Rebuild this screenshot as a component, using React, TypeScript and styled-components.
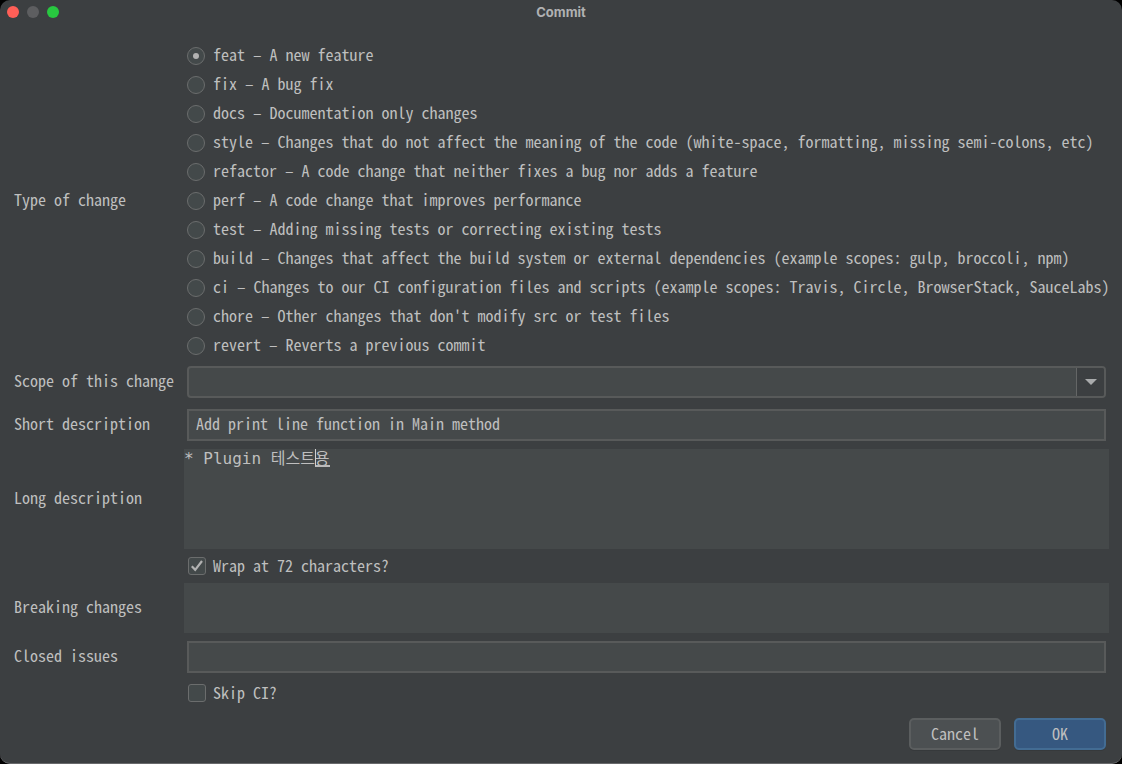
import React, { useState } from "react";
import styled, { createGlobalStyle, css } from "styled-components";

const mono = `"Noto Sans Mono CJK KR", "Noto Sans Mono CJK SC", "Liberation Mono", monospace`;

const GlobalStyle = createGlobalStyle`
  *, *::before, *::after { box-sizing: border-box; }
  body {
    margin: 0;
    background: #000;
    color: #bfbfbf;
    font: 16px/20px ${mono};
  }
  input, select, textarea, button { font: inherit; color: inherit; margin: 0; }
`;

const Window = styled.main`
  display: flex;
  flex-direction: column;
  min-height: calc(100vh - 1px);
  background: #3c3f41;
  border-bottom: 1px solid #68696b;
  border-radius: 10px;
`;

const TitleBar = styled.header`
  display: grid;
  grid-template-columns: 1fr auto 1fr;
  align-items: center;
  height: 24px;
  padding: 0 7px;
`;

const Title = styled.h1`
  margin: 0;
  font: 700 13px/24px "Inter", sans-serif;
  color: #b0b1b2;
`;

const Lights = styled.div`
  display: flex;
  gap: 8px;
`;

const Light = styled.button<{ $color: string }>`
  width: 12px;
  height: 12px;
  padding: 0;
  border: 0;
  border-radius: 50%;
  background: ${(p) => p.$color};
`;

const Form = styled.form`
  display: flex;
  flex-direction: column;
  padding: 17px 13px 13px 14px;
`;

const Row = styled.div<{ $gap?: number }>`
  display: grid;
  grid-template-columns: 170px minmax(0, 1fr);
  align-items: center;
  margin-top: ${(p) => p.$gap ?? 0}px;
`;

const RowLabel = styled.label`
  padding-bottom: 4px;
  white-space: nowrap;
`;

const Options = styled.div`
  display: flex;
  flex-direction: column;
`;

const Option = styled.label`
  display: flex;
  align-items: center;
  gap: 8px;
  height: 29px;
  padding-left: 3px;
  white-space: nowrap;
`;

const OptionText = styled.span`
  padding-bottom: 3px;
`;

const Radio = styled.input`
  appearance: none;
  display: grid;
  place-items: center;
  flex: none;
  width: 18px;
  height: 18px;
  border: 1px solid #6b6d6d;
  border-radius: 50%;
  background: #43494a;

  &:checked::before {
    content: "";
    width: 6px;
    height: 6px;
    border-radius: 50%;
    background: #b2b2b2;
  }
`;

const CheckLabel = styled.label`
  grid-column: 2;
  display: flex;
  align-items: center;
  gap: 7px;
  height: 34px;
  padding-left: 4px;
`;

const CheckBox = styled.span`
  display: grid;
  width: 18px;
  height: 18px;

  > * { grid-area: 1 / 1; }
  svg { pointer-events: none; visibility: hidden; }
  input:checked + svg { visibility: visible; }
`;

const Check = styled.input`
  appearance: none;
  width: 18px;
  height: 18px;
  border: 1px solid #6b6d6d;
  border-radius: 3px;
  background: #43494a;
`;

const field = css`
  width: 100%;
  height: 32px;
  padding: 0 7px 4px;
  border: 2px solid #585a5a;
  border-radius: 0;
  outline: 0;
  background: #45494a;
`;

const FieldBox = styled.div`
  display: grid;
  padding: 0 3px;
`;

const TextField = styled.input`
  ${field}
`;

const Combo = styled.div`
  display: grid;
  grid-template-columns: minmax(0, 1fr) 30px;
  margin: 0 3px;
`;

const Select = styled.select`
  ${field}
  appearance: none;
  grid-area: 1 / 1 / 2 / 3;
  border-radius: 4px;
`;

const Arrow = styled.span`
  grid-area: 1 / 2;
  display: grid;
  place-items: center;
  margin: 2px 2px 2px 0;
  border-left: 1px solid #646666;
  border-radius: 0 2px 2px 0;
  background: #3c3f41;
  pointer-events: none;
`;

const Editor = styled.div`
  position: relative;
  display: grid;
`;

const TextArea = styled.textarea<{ $height: number }>`
  display: block;
  width: 100%;
  height: ${(p) => p.$height}px;
  padding: 0;
  border: 0;
  outline: 0;
  resize: none;
  background: #45494a;
  font: 16px/20px "DejaVu Sans Mono", "Noto Sans CJK KR", monospace;
`;

/* Caret and underline shown around the syllable being composed */
const Composition = styled.span`
  position: absolute;
  top: 0;
  left: 131px;
  width: 15px;
  height: 18px;
  border-left: 1px solid #d0d0d0;
  border-bottom: 2px solid #bbbbbb;
  pointer-events: none;
`;

const Footer = styled.footer`
  display: flex;
  justify-content: flex-end;
  gap: 13px;
  margin-top: 8px;
  padding-right: 3px;
`;

const Button = styled.button<{ $primary?: boolean }>`
  width: 92px;
  height: 32px;
  padding: 0 0 3px;
  border: 2px solid ${(p) => (p.$primary ? "#436c93" : "#5b5e5f")};
  border-radius: 5px;
  background: ${(p) => (p.$primary ? "#365880" : "#4c5052")};
  box-shadow: 0 1px 0 #36393b;
`;

const types = [
  ["feat", "A new feature"],
  ["fix", "A bug fix"],
  ["docs", "Documentation only changes"],
  ["style", "Changes that do not affect the meaning of the code (white-space, formatting, missing semi-colons, etc)"],
  ["refactor", "A code change that neither fixes a bug nor adds a feature"],
  ["perf", "A code change that improves performance"],
  ["test", "Adding missing tests or correcting existing tests"],
  ["build", "Changes that affect the build system or external dependencies (example scopes: gulp, broccoli, npm)"],
  ["ci", "Changes to our CI configuration files and scripts (example scopes: Travis, Circle, BrowserStack, SauceLabs)"],
  ["chore", "Other changes that don't modify src or test files"],
  ["revert", "Reverts a previous commit"],
];

function CheckOption({ label, checked }: { label: string; checked?: boolean }) {
  return (
    <CheckLabel>
      <CheckBox>
        <Check type="checkbox" defaultChecked={checked} />
        <svg width="18" height="18" viewBox="0 0 18 18" fill="none" stroke="#b2b2b2" strokeWidth="2.2">
          <path d="M3.8 9.2 7.2 12.8 14 4" />
        </svg>
      </CheckBox>
      <OptionText>{label}</OptionText>
    </CheckLabel>
  );
}

export default function App() {
  const [type, setType] = useState("feat");
  const [composing, setComposing] = useState(true);

  return (
    <>
      <GlobalStyle />
      <Window>
        <TitleBar>
          <Lights>
            <Light type="button" aria-label="Close" $color="#ff5f57" />
            <Light type="button" aria-label="Minimize" disabled $color="#5d5e60" />
            <Light type="button" aria-label="Zoom" $color="#28c840" />
          </Lights>
          <Title>Commit</Title>
        </TitleBar>
        <Form onSubmit={(e) => e.preventDefault()}>
          <Row>
            <RowLabel as="span" id="type-label">Type of change</RowLabel>
            <Options role="radiogroup" aria-labelledby="type-label">
              {types.map(([name, text]) => (
                <Option key={name}>
                  <Radio type="radio" name="type" checked={type === name} onChange={() => setType(name)} />
                  <OptionText>{`${name} – ${text}`}</OptionText>
                </Option>
              ))}
            </Options>
          </Row>
          <Row $gap={6}>
            <RowLabel htmlFor="scope">Scope of this change</RowLabel>
            <Combo>
              <Select id="scope"><option value="" /></Select>
              <Arrow>
                <svg width="12" height="6" viewBox="0 0 12 6" fill="#a9abac">
                  <path d="M0 0h12L6 6z" />
                </svg>
              </Arrow>
            </Combo>
          </Row>
          <Row $gap={11}>
            <RowLabel htmlFor="short">Short description</RowLabel>
            <FieldBox>
              <TextField id="short" defaultValue="Add print line function in Main method" />
            </FieldBox>
          </Row>
          <Row $gap={8}>
            <RowLabel htmlFor="long">Long description</RowLabel>
            <Editor>
              <TextArea
                id="long"
                $height={100}
                spellCheck={false}
                defaultValue="* Plugin 테스트용"
                onChange={() => setComposing(false)}
              />
              {composing && <Composition />}
            </Editor>
          </Row>
          <Row>
            <CheckOption label="Wrap at 72 characters?" checked />
          </Row>
          <Row>
            <RowLabel htmlFor="breaking">Breaking changes</RowLabel>
            <TextArea id="breaking" $height={50} />
          </Row>
          <Row $gap={8}>
            <RowLabel htmlFor="closed">Closed issues</RowLabel>
            <FieldBox>
              <TextField id="closed" />
            </FieldBox>
          </Row>
          <Row $gap={3}>
            <CheckOption label="Skip CI?" />
          </Row>
          <Footer>
            <Button type="button">Cancel</Button>
            <Button type="submit" $primary>OK</Button>
          </Footer>
        </Form>
      </Window>
    </>
  );
}
